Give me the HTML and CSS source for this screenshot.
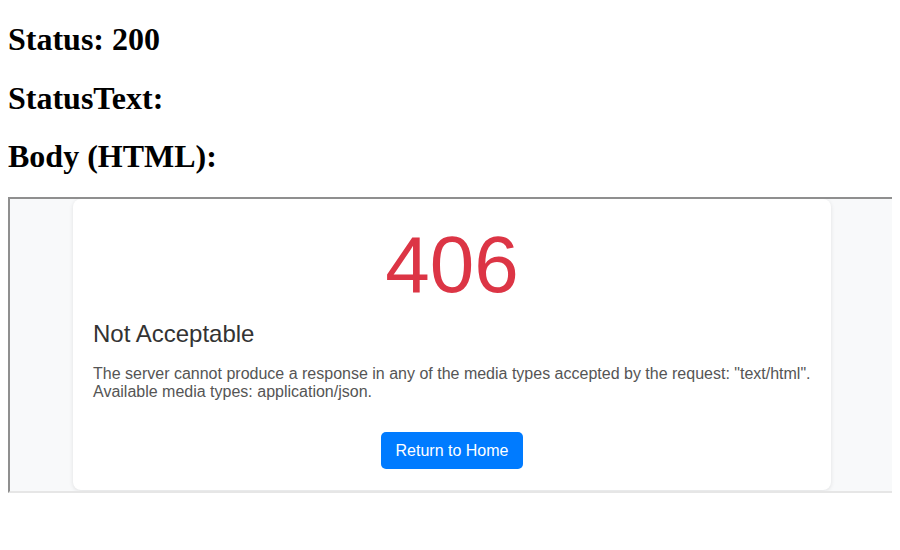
FILE: index.html
```html
<!DOCTYPE html>
<html>
<head>
<meta charset="utf-8">
<title>Response</title>
<link rel="stylesheet" href="styles.css">
</head>
<body>
<h1 class="head first">Status: 200</h1>
<h1 class="head">StatusText:</h1>
<h1 class="head">Body (HTML):</h1>
<div class="frame">
  <div class="card">
    <div class="code">406</div>
    <h2 class="title">Not Acceptable</h2>
    <p class="msg">The server cannot produce a response in any of the media types accepted by the request: "text/html". Available media types: application/json.</p>
    <div class="actions"><button class="btn">Return to Home</button></div>
  </div>
</div>
</body>
</html>
```
FILE: styles.css
```css
body {
  margin: 8px;
  font-family: "Liberation Serif", "Times New Roman", serif;
  background: #fff;
}
.head {
  font-size: 32px;
  font-weight: bold;
  margin: 21.44px 0;
  line-height: normal;
}
.head.first {
  margin-top: 13.44px;
}
.frame {
  width: 884px;
  height: 292px;
  border-width: 2px;
  border-style: solid;
  border-color: #8f8f8f #e6e6e6 #e6e6e6 #8f8f8f;
  background: #f8f9fa;
  font-family: "Liberation Sans", Arial, sans-serif;
  overflow: hidden;
}
.card {
  box-sizing: border-box;
  width: 758px;
  margin: 0 auto;
  background: #fff;
  border-radius: 8px;
  box-shadow: 0 1px 4px rgba(0, 0, 0, 0.1);
  padding: 20px 20px 21px;
}
.code {
  font-size: 80px;
  line-height: normal;
  color: #dc3545;
  text-align: center;
}
.title {
  margin: 9.5px 0 0;
  font-size: 24px;
  font-weight: normal;
  line-height: normal;
  color: #333;
}
.msg {
  margin: 17px 0 0;
  font-size: 16px;
  line-height: normal;
  color: #555;
}
.actions {
  margin-top: 30.5px;
  text-align: center;
}
.btn {
  font-family: "Liberation Sans", Arial, sans-serif;
  font-size: 16px;
  line-height: 17px;
  padding: 10px 15px;
  border: none;
  border-radius: 5px;
  background: #007bff;
  color: #fff;
  cursor: pointer;
}
```
